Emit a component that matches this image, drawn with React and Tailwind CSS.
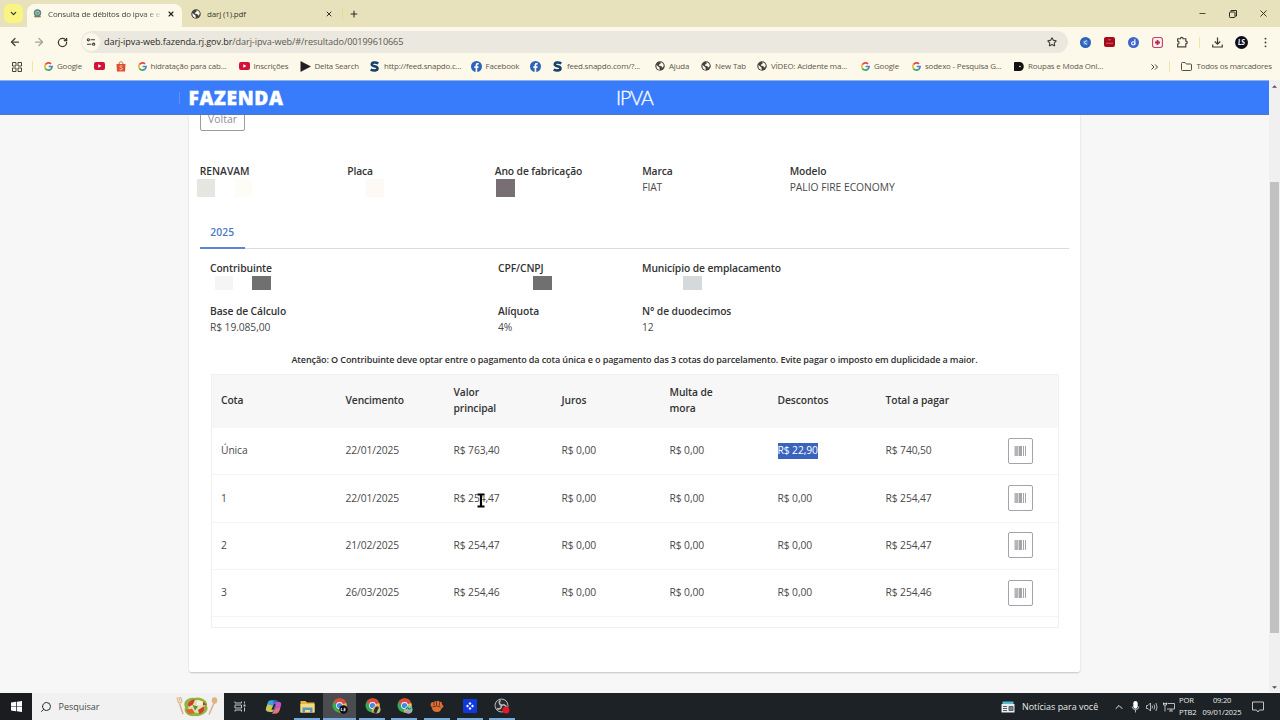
import { ArrowLeft, ArrowRight, RotateCw, Star, X, Plus, ChevronDown, ChevronUp, Minus, Search } from "lucide-react";

function Globe() {
  return (
    <svg viewBox="0 0 20 20" className="size-[10px] shrink-0">
      <circle cx="10" cy="10" r="9.500" fill="#45443c" />
      <path d="M3 8 L9 13 L9.500 18 C5 17 2 14 3 8Z M11 2.500 C15 3 17.500 6 17.500 10 L14.500 13.500 L12.500 10 L8 9.500 L8 7 L11 6Z" fill="#fdf9ea" />
    </svg>
  );
}

function GoogleG() {
  return (
    <svg viewBox="0 0 24 24" className="size-[9px] shrink-0" fill="none" strokeWidth="4.500">
      <path d="M18.800 5.200A9.600 9.600 0 0 0 3.700 7.200" stroke="#e5483a" />
      <path d="M3.700 7.200A9.600 9.600 0 0 0 3.700 16.800" stroke="#efb62c" />
      <path d="M3.700 16.800A9.600 9.600 0 0 0 18.200 19.300" stroke="#3fa35a" />
      <path d="M18.200 19.300A9.600 9.600 0 0 0 21.600 12H12.500" stroke="#4a80dd" />
    </svg>
  );
}

function YouTube() {
  return (
    <svg viewBox="0 0 22 16" className="h-[8px] w-[11px] shrink-0">
      <rect width="22" height="16" rx="4" fill="#d3123c" />
      <path d="M8.500 4.500 15 8l-6.500 3.500Z" fill="#fff" />
    </svg>
  );
}

function Shop() {
  return (
    <svg viewBox="0 0 20 22" className="h-[11px] w-[10px] shrink-0">
      <path d="M6 6C6 0 14 0 14 6" fill="none" stroke="#d8502f" strokeWidth="1.800" />
      <path d="M1 6H19L18 21H2Z" fill="#dd4f30" />
      <path d="M13 10.500C11 8.500 7.500 9.500 8 11.500C8.500 13.500 13 13 12.500 16C12 18 9 18 7 16.500" fill="none" stroke="#fbe3d8" strokeWidth="1.700" />
    </svg>
  );
}

function Play() {
  return (
    <svg viewBox="0 0 20 20" className="size-[11px] shrink-0">
      <path d="M1.500 1 19 10 1.500 19Z" fill="#20201e" stroke="#20201e" strokeWidth="1" />
    </svg>
  );
}

function Snap() {
  return (
    <svg viewBox="0 0 20 20" className="size-[11px] shrink-0">
      <path d="M17 4.200C12 2 5 2 5 6.200C5 10.400 15.500 8.800 15.500 13.500C15.500 17.800 8 18 3 15.500" fill="none" stroke="#17416f" strokeWidth="4.600" />
    </svg>
  );
}

function Facebook() {
  return (
    <svg viewBox="0 0 20 20" className="size-[11px] shrink-0">
      <circle cx="10" cy="10" r="10" fill="#2b64bd" />
      <path d="M8.300 20V12.500H6V9.500H8.300V7.500C8.300 5 9.800 3.800 12 3.800H14V6.500H12.700C11.700 6.500 11.400 7 11.400 7.800V9.500H13.900L13.500 12.500H11.400V20Z" fill="#fdf9ea" />
    </svg>
  );
}

function Roupas() {
  return (
    <svg viewBox="0 0 20 18" className="h-[9px] w-[10px] shrink-0">
      <path d="M2 0H12C22 1 22 17 12 18H2C0 18 0 17 0 16V2C0 0 1 0 2 0Z" fill="#111" />
      <circle cx="12" cy="9" r="1.600" fill="#fff" />
    </svg>
  );
}

const bookmarks = [
  { w: "w-[50px]", icon: <GoogleG />, label: "Google" },
  { w: "w-[21.500px]", icon: <YouTube /> },
  { w: "w-[22px]", icon: <Shop /> },
  { w: "w-[101px]", icon: <GoogleG />, label: "hidratação para cab..." },
  { w: "w-[61px]", icon: <YouTube />, label: "Inscrições" },
  { w: "w-[69.500px]", icon: <Play />, label: "Delta Search" },
  { w: "w-[101.500px]", icon: <Snap />, label: "http://feed.snapdo.c..." },
  { w: "w-[59.500px]", icon: <Facebook />, label: "Facebook" },
  { w: "w-[22px]", icon: <Facebook /> },
  { w: "w-[103px]", icon: <Snap />, label: "feed.snapdo.com/?..." },
  { w: "w-[46px]", icon: <Globe />, label: "Ajuda" },
  { w: "w-[56px]", icon: <Globe />, label: "New Tab" },
  { w: "w-[104px]", icon: <Globe />, label: "VÍDEO: Acidente ma..." },
  { w: "w-[51px]", icon: <GoogleG />, label: "Google" },
  { w: "w-[102px]", icon: <GoogleG />, label: "sodexo - Pesquisa G..." },
  { w: "w-[98px]", icon: <Roupas />, label: "Roupas e Moda Onl..." },
];

function TabStrip() {
  return (
    <div className="flex h-[27px] bg-[#e7e2bb] pl-1 text-[8px] tracking-[-0.14px] text-[#3b3a30]">
      <div className="mt-[4px] flex h-[19px] w-[19px] items-center justify-center rounded-md bg-[#f8f583]">
        <ChevronDown className="size-[9px] text-[#2c2b20]" strokeWidth={3} />
      </div>
      <div className="mt-[4px] ml-[4px] flex h-[23px] w-[155px] items-center rounded-t-lg bg-[#fdf9ea] pb-[4px] pl-[6px]">
        <svg viewBox="0 0 20 20" className="size-[9px] shrink-0">
          <circle cx="10" cy="9" r="6.500" fill="#dfe6df" stroke="#5e8a6f" strokeWidth="3.500" />
          <path d="M7 6H13V11L10 14L7 11Z" fill="#718fae" />
          <path d="M3 17H17" stroke="#7b7a52" strokeWidth="3" />
        </svg>
        <span className="ml-[6px] w-[112px] overflow-hidden bg-linear-to-r from-[#3b3a30] from-85% to-[#3b3a3033] bg-clip-text whitespace-nowrap text-transparent">Consulta de débitos do ipva e e</span>
        <X className="ml-[6.500px] size-[8px] shrink-0 text-[#1f1f1b]" strokeWidth={3.2} />
      </div>
      <div className="mt-[4px] flex h-[19px] items-center pl-[9px]">
        <Globe />
        <span className="ml-[6px] w-[118px] whitespace-nowrap">darj (1).pdf</span>
        <X className="size-[8px] text-[#33322a]" strokeWidth={3} />
        <div className="ml-[9px] h-[11px] w-px bg-[#e6e07d]" />
        <Plus className="ml-[6px] size-[10px] text-[#2e2d25]" strokeWidth={2.600} />
      </div>
      <div className="ml-auto flex h-[27px] items-center pr-[11px]">
        <Minus className="size-[9px] text-[#2b2a24]" strokeWidth={2.200} />
        <svg viewBox="0 0 16 16" className="ml-[22px] size-[8px]" fill="none" stroke="#2b2a24" strokeWidth="2">
          <rect x="1" y="4" width="11" height="11" rx="1.500" />
          <path d="M4 3.500V1H15V12H12.500" />
        </svg>
        <X className="ml-[21px] size-[11px] text-[#2b2a24]" strokeWidth={2} />
      </div>
    </div>
  );
}

function Toolbar() {
  return (
    <div className="flex h-[30px] items-center bg-[#fdf9ea] pl-[9px]">
      <ArrowLeft className="size-[12px] text-[#45443b]" strokeWidth={2.500} />
      <ArrowRight className="ml-[12px] size-[12px] text-[#a5a296]" strokeWidth={2.500} />
      <RotateCw className="ml-[12px] size-[11px] text-[#3c3b33]" strokeWidth={2.800} />
      <div className="ml-[13px] flex h-[22px] w-[987px] items-center rounded-full bg-[#ebe8df] pl-[1px]">
        <div className="flex size-[18px] items-center justify-center rounded-full bg-[#fdf9ea]">
          <svg viewBox="0 0 20 18" className="h-[8px] w-[10px]" fill="none" stroke="#3c3b33" strokeWidth="2.400">
            <circle cx="4" cy="4" r="2.500" />
            <path d="M9 4H19M1 14H11" />
            <circle cx="16" cy="14" r="2.500" />
          </svg>
        </div>
        <span className="ml-[4px] text-[9.100px] tracking-[-0.09px] whitespace-nowrap text-[#5b594e]">
          <span className="text-[#2a2922]">darj-ipva-web.fazenda.rj.gov.br</span>/darj-ipva-web/#/resultado/00199610665
        </span>
        <Star className="mr-[11px] ml-auto size-[10px] text-[#3c3b33]" strokeWidth={2.500} />
      </div>
      <svg viewBox="0 0 20 20" className="ml-[12px] size-[11px]">
        <circle cx="10" cy="10" r="10" fill="#2a62b8" />
        <circle cx="10" cy="10" r="5.500" fill="#4a7fce" />
        <path d="M12.500 6.500 7 10 12.500 13.500" fill="none" stroke="#d8e6fa" strokeWidth="1.800" />
      </svg>
      <svg viewBox="0 0 22 20" className="ml-[13px] h-[10px] w-[11px]">
        <rect width="22" height="20" rx="4" fill="#a80c1c" />
        <path d="M4 12.500H18M8 5.500H14" stroke="#cf5a60" strokeWidth="2" />
      </svg>
      <svg viewBox="0 0 20 20" className="ml-[13px] size-[11px]">
        <circle cx="10" cy="10" r="10" fill="#3b67cb" />
        <circle cx="9.500" cy="11.500" r="3" fill="none" stroke="#fff" strokeWidth="2" />
        <path d="M12.500 4V14" stroke="#fff" strokeWidth="2" />
      </svg>
      <svg viewBox="0 0 20 20" className="ml-[13px] size-[11px]">
        <rect x="1" y="1" width="18" height="18" rx="4" fill="#fbeff0" stroke="#c44762" strokeWidth="2" />
        <path d="M10 5.500V14.500M5.500 10H14.500" stroke="#b8264a" strokeWidth="3.200" />
      </svg>
      <svg viewBox="0 0 22 22" className="ml-[13px] size-[12px]" fill="none" stroke="#45443b" strokeWidth="2.200">
        <path d="M3 5H8C8 1.500 13 1.500 13 5H18V9.500C21.500 9.500 21.500 14.500 18 14.500V20H3V15C6.500 15 6.500 9.500 3 9.500Z" />
      </svg>
      <div className="ml-[11px] h-[11px] w-px bg-[#ece8a4]" />
      <svg viewBox="0 0 22 22" className="ml-[12px] size-[11px]" fill="none" stroke="#3c3b33" strokeWidth="2.400">
        <path d="M11 1V14M5.500 9 11 14.500 16.500 9M1.500 15V20H20.500V15" />
      </svg>
      <div className="ml-[12px] flex size-[13px] items-center justify-center rounded-full bg-[#0d0d1c] font-['Lato'] text-[7px] leading-none font-black text-white italic">LS</div>
      <svg viewBox="0 0 4 20" className="ml-[16px] h-[11px] w-[3px]" fill="#3c3b33">
        <circle cx="2" cy="3" r="1.700" />
        <circle cx="2" cy="10" r="1.700" />
        <circle cx="2" cy="17" r="1.700" />
      </svg>
    </div>
  );
}

function Bookmarks() {
  return (
    <div className="flex h-[23px] items-center bg-[#fdf9ea] pb-[4px] pl-[12px] text-[7.900px] tracking-[-0.160px] text-[#5a584c]">
      <svg viewBox="0 0 20 20" className="size-[10px] shrink-0" fill="none" stroke="#45443b" strokeWidth="2">
        <path d="M1 1H8V8H1ZM12 1H19V8H12ZM1 12H8V19H1ZM12 12H19V19H12Z" />
      </svg>
      <div className="ml-[10px] h-[11px] w-px bg-[#ece8a4]" />
      <div className="ml-[11px] flex shrink-0">
        {bookmarks.map((b, i) => (
          <div key={i} className={`${b.w} flex shrink-0 items-center gap-[4px] whitespace-nowrap`}>
            {b.icon}
            {b.label && <span>{b.label}</span>}
          </div>
        ))}
      </div>
      <svg viewBox="0 0 14 12" className="ml-[38.500px] h-[6px] w-[7px] shrink-0" fill="none" stroke="#3c3b33" strokeWidth="2">
        <path d="M1 1 6 6 1 11M8 1 13 6 8 11" />
      </svg>
      <div className="ml-[11px] h-[11px] w-px bg-[#ece8a4]" />
      <svg viewBox="0 0 22 18" className="ml-[11px] h-[9px] w-[11px] shrink-0" fill="none" stroke="#4f4d43" strokeWidth="2">
        <path d="M1 3C1 1.500 1.500 1 3 1H8L10.500 4H19C20.500 4 21 4.500 21 6V15C21 16.500 20.500 17 19 17H3C1.500 17 1 16.500 1 15Z" />
      </svg>
      <span className="ml-[5px] tracking-[-0.200px] whitespace-nowrap">Todos os marcadores</span>
    </div>
  );
}

function Field({ w, label, children }) {
  return (
    <div className={`${w} shrink-0 leading-[16px] whitespace-nowrap`}>
      <div className="font-semibold text-[#333]">{label}</div>
      <div className="h-[16px]">{children}</div>
    </div>
  );
}

const cols = "grid grid-cols-[124.500px_108px_108px_108px_108px_108px_100px_1fr] items-center pl-[9.500px]";

const rows = [
  ["Única", "22/01/2025", "R$ 763,40", "R$ 0,00", "R$ 0,00", "R$ 22,90", "R$ 740,50"],
  ["1", "22/01/2025", "R$ 254,47", "R$ 0,00", "R$ 0,00", "R$ 0,00", "R$ 254,47"],
  ["2", "21/02/2025", "R$ 254,47", "R$ 0,00", "R$ 0,00", "R$ 0,00", "R$ 254,47"],
  ["3", "26/03/2025", "R$ 254,46", "R$ 0,00", "R$ 0,00", "R$ 0,00", "R$ 254,46"],
];

function BarcodeButton() {
  return (
    <button className="-mt-px ml-[22px] flex h-[26px] w-[25px] items-center justify-center rounded-[2px] border border-[#a3a3a8] bg-white">
      <svg viewBox="0 0 12 10" className="h-[10px] w-[12px]">
        <rect x="0.500" width="4" height="10" fill="#b4b4b8" />
        <rect x="5" width="3" height="10" fill="#a4a4a9" />
        <rect x="9" width="1" height="10" fill="#a4a4a9" />
        <rect x="11" width="1" height="10" fill="#a4a4a9" />
      </svg>
    </button>
  );
}

function QuotaTable() {
  return (
    <div className="relative mt-[6.500px] ml-[0.500px] h-[254px] w-[848px] border border-[#f0f0f0]">
      <div className={`${cols} h-[53px] bg-[#f7f7f7] pb-[4px] leading-[16px] font-semibold text-[#333]`}>
        <div>Cota</div>
        <div>Vencimento</div>
        <div className="w-[50px]">Valor principal</div>
        <div>Juros</div>
        <div className="w-[50px]">Multa de mora</div>
        <div>Descontos</div>
        <div>Total a pagar</div>
      </div>
      {rows.map((r, i) => (
        <div key={r[0]} className={`${cols} h-[47.300px] border-b border-[#f4f4f4]`}>
          {r.map((c, j) => (
            <div key={j}>
              <span className={i === 0 && j === 5 ? "inline-block h-[16px] bg-[#3a63bd] leading-[15px] text-white" : ""}>{c}</span>
            </div>
          ))}
          <BarcodeButton />
        </div>
      ))}
      <svg viewBox="0 0 8 15" className="absolute top-[118px] left-[265px] h-[15px] w-[8px]" fill="none">
        <path d="M0.500 1.500H7.500M0.500 13.500H7.500M4 1.500V13.500" stroke="#fff" strokeWidth="3" />
        <path d="M0.500 1.500H7.500M0.500 13.500H7.500M4 1.500V13.500" stroke="#000" strokeWidth="2.200" />
      </svg>
    </div>
  );
}

function Page() {
  return (
    <div className="flex h-[612px] w-full">
      <div className="flex w-[1269px] flex-col bg-[#f7f7f7] text-[10.300px] tracking-[-0.1px] text-[#4a4a4a]">
        <div className="relative z-10 flex h-[35px] shrink-0 items-center border-t border-b border-t-[#8fb0e6] border-b-[#5477b8] bg-[#397cfb] text-white">
          <div className="ml-[179px] h-[12px] w-px bg-[#5a93fb]" />
          <div className="ml-[8.500px] w-[427.500px] pt-[1px] text-[19.200px] font-extrabold tracking-[0.650px] [-webkit-text-stroke:0.4px_white]">FAZENDA</div>
          <div className="font-['Lato'] text-[19.500px] font-light tracking-[-1px] [-webkit-text-stroke:0.3px_white]">IPVA</div>
        </div>
        <div className="mx-auto h-[558px] w-[891px] shrink-0 rounded-b-[3px] border-b border-b-[#cfcfcf] bg-white px-[11px] shadow-[0_0_2px_rgba(0,0,0,0.18)]">
          <button className="-mt-[7px] flex h-[23px] w-[45px] items-center justify-center rounded-[2px] border border-[#9a9ba3] tracking-[0.1px] text-[#8b8d99]">Voltar</button>
          <div className="mt-[32px] -ml-[0.300px] flex">
            <Field w="w-[147.500px]" label={<span className="tracking-[0px]">RENAVAM</span>}>
              <div className="-ml-[3px] flex h-[18px]">
                <div className="h-[18px] w-[18px] shrink-0 bg-[#e5e6df]" />
                <div className="ml-[20px] h-[18px] w-[17px] shrink-0 bg-[#fefdf5]" />
              </div>
            </Field>
            <Field w="w-[147.500px]" label="Placa">
              <div className="ml-[18.500px] h-[18px] w-[18px] bg-[#fdfaf6]" />
            </Field>
            <Field w="w-[147.500px]" label="Ano de fabricação">
              <div className="ml-[1px] h-[18px] w-[19px] bg-[#776f73]" />
            </Field>
            <Field w="w-[147.500px]" label="Marca">FIAT</Field>
            <Field w="w-[147.500px]" label="Modelo"><span className="tracking-[-0.030px]">PALIO FIRE ECONOMY</span></Field>
          </div>
          <div className="mt-[21px] flex h-[33px] border-b border-[#dcdcdc]">
            <div className="-mb-px flex h-[33px] w-[44.500px] justify-center border-b-2 border-[#5b87d3] pt-[7px] leading-[18px] font-semibold tracking-[0.050px] text-[#4a7ac6]">2025</div>
          </div>
          <div className="px-[10px]">
            <div className="mt-[11px] flex">
              <Field w="w-[288px]" label="Contribuinte">
                <div className="flex pl-[5px]">
                  <div className="h-[14px] w-[18px] bg-[#f5f5f5]" />
                  <div className="ml-[19px] h-[14px] w-[19px] bg-[#707070]" />
                </div>
              </Field>
              <Field w="w-[144px]" label="CPF/CNPJ">
                <div className="ml-[35px] h-[14px] w-[19px] bg-[#707070]" />
              </Field>
              <Field w="w-[144px]" label="Município de emplacamento">
                <div className="ml-[41px] h-[14px] w-[19px] bg-[#d4dadb]" />
              </Field>
            </div>
            <div className="mt-[11px] flex">
              <Field w="w-[288px]" label="Base de Cálculo">R$ 19.085,00</Field>
              <Field w="w-[144px]" label="Alíquota">4%</Field>
              <Field w="w-[144px]" label="N° de duodecimos">12</Field>
            </div>
            <div className="mt-[16.500px] text-center text-[9.050px] leading-[16px] font-semibold tracking-[-0.115px] whitespace-nowrap text-[#2e2e2e]">
              Atenção: O Contribuinte deve optar entre o pagamento da cota única e o pagamento das 3 cotas do parcelamento. Evite pagar o imposto em duplicidade a maior.
            </div>
            <QuotaTable />
          </div>
        </div>
      </div>
      <div className="flex w-[11px] flex-col items-center bg-[#f0f0f0]">
        <svg viewBox="0 0 8 4" className="mt-[5px] h-[3px] w-[5px]"><path d="M0 4 4 0 8 4Z" fill="#505050" /></svg>
        <div className="mt-[94px] h-[451px] w-[9px] bg-[#c1c1c1]" />
        <svg viewBox="0 0 8 4" className="mt-[53px] h-[3px] w-[5px]"><path d="M0 0 4 4 8 0Z" fill="#505050" /></svg>
      </div>
    </div>
  );
}

function Chrome({ badge }) {
  return (
    <svg viewBox="0 0 32 32" className="ml-[2px] size-[16px]">
      <circle cx="15" cy="15" r="14" fill="#39a852" />
      <path d="M15 15 3 8A14 14 0 0 1 28.500 10Z" fill="#e2483c" />
      <path d="M15 15 28.500 10A14 14 0 0 1 14 29Z" fill="#f3c13a" />
      <circle cx="15" cy="15" r="6.800" fill="#f3f6fa" />
      <circle cx="15" cy="15" r="5.200" fill="#4285e8" />
      {badge}
    </svg>
  );
}

function TaskItem({ active, open = true, children, w = "w-[32.600px]" }) {
  return (
    <div className={`${w} flex shrink-0 flex-col items-center ${active ? "bg-[#4a4c4f]" : ""}`}>
      <div className="flex h-[25px] items-center pt-px">{children}</div>
      {open && <div className={`h-[2px] bg-[#78aadb] ${active ? "w-full" : "w-[26px]"}`} />}
    </div>
  );
}

function Salad() {
  return (
    <svg viewBox="0 0 84 42" className="h-[21px] w-[42px]">
      <path d="M7 15 14 36" stroke="#dcb184" strokeWidth="3" />
      <path d="M2 3 4 11Q6 16 10 13L12 10 9 2M6 2 8 11" fill="none" stroke="#dfb27f" strokeWidth="2.200" />
      <path d="M76 14 66 37" stroke="#dcb184" strokeWidth="3" />
      <ellipse cx="77" cy="9" rx="5.500" ry="6.500" fill="#dfb27f" />
      <path d="M18 22C12 10 27 2 36 4C48 0 65 8 62 20C68 32 50 42 38 40C26 42 14 34 18 22Z" fill="#8fb53f" />
      <ellipse cx="41" cy="21" rx="17" ry="13" fill="#dfe3b4" />
      <path d="M24 16Q28 7 38 7L34 17 25 22ZM44 28 57 20Q59 30 47 36Z" fill="#cf3d2b" />
      <path d="M19 28 32 25 38 34 26 36Z" fill="#e0642f" />
      <path d="M42 8 54 11 51 19 42 18Z" fill="#f6efdc" />
      <path d="M33 18 44 21 38 29Z" fill="#5c9431" />
      <path d="M54 12 61 17 54 19Z" fill="#c33a2a" />
    </svg>
  );
}

function Taskbar() {
  return (
    <div className="flex h-[27px] bg-[#1c2226] text-[#e9eaea]">
      <div className="flex w-[32px] items-center justify-center bg-[#1b1c20]">
        <svg viewBox="0 0 22 22" className="size-[11px]" fill="#fff">
          <path d="M0 3 10 1.700V10.300H0ZM11.500 1.500 22 0V10.300H11.500ZM0 11.700H10V20.300L0 19ZM11.500 11.700H22V22L11.500 20.500Z" />
        </svg>
      </div>
      <div className="flex w-[192px] items-center bg-[#f1f1f1] pl-[8px] text-[9px] text-[#484848]">
        <Search className="size-[12px] -scale-x-100 text-[#2b2b2b]" strokeWidth={2} />
        <span className="ml-[6.500px] pt-px">Pesquisar</span>
        <div className="mr-[6px] ml-auto"><Salad /></div>
      </div>
      <TaskItem open={false} w="w-[32px]">
        <svg viewBox="0 0 24 22" className="h-[11px] w-[12px]" fill="none" stroke="#d7d9da" strokeWidth="1.800">
          <path d="M2 1V4H15V1M2 21V18H15V21M2 8H15V14H2ZM21 1V5M21 13V21" />
          <rect x="20" y="8" width="2" height="2" />
        </svg>
      </TaskItem>
      <TaskItem open={false} w="w-[35px]">
        <svg viewBox="0 0 32 28" className="h-[15px] w-[17px]">
          <path d="M10 2H20Q23 2 22 6L17 21Q15 26 10 24H6Q0 23 2 17L5 7Q6 2 10 2Z" fill="#37a4dd" />
          <path d="M2 17 5 10 17 13 15 22Q13 26 8 24Q0 23 2 17Z" fill="#d3c64b" />
          <path d="M15 8Q17 4 22 5H26Q32 6 30 12L27 22Q25 27 21 27H13Q17 25 18 20L20 13Z" fill="#c355c8" />
          <path d="M17 20 29 15 27 22Q25 27 21 27H13Q16 25 17 20Z" fill="#ec6f72" />
          <path d="M16 2H20Q24 2 25 6H21Q17 6 16 9Z" fill="#2563c4" />
          <path d="M17 9H20L16 20H12Z" fill="#1c2226" />
        </svg>
      </TaskItem>
      <TaskItem w="w-[32px]">
        <svg viewBox="0 0 30 26" className="h-[13px] w-[15px]">
          <path d="M1 2H11L14 5H29V25H1Z" fill="#e9b53d" />
          <path d="M1 8H29V25H1Z" fill="#f7da79" />
          <path d="M5 15H25V25H20V20H10V25H5Z" fill="#559ac4" />
        </svg>
      </TaskItem>
      <TaskItem active>
        <Chrome badge={<><circle cx="23" cy="23" r="8.500" fill="#0c0d16" /><path d="M19 20 18 25H21M27 20.500H24.500L24 23H26.500L26 25.500H22.500" fill="none" stroke="#fff" strokeWidth="1.600" /></>} />
      </TaskItem>
      <TaskItem>
        <Chrome badge={<><circle cx="23" cy="23" r="8" fill="#c8b68f" /><path d="M17 28C19 18 24 14 28 20C25 22 25 28 22 31Z" fill="#332a20" /></>} />
      </TaskItem>
      <TaskItem>
        <Chrome badge={<><circle cx="23" cy="23" r="8" fill="#78cbb4" /><path d="M16 26H30Q27 31 23 31T16 26Z" fill="#de8db0" /><path d="M18 22 22 19 24 23 29 20" fill="none" stroke="#306c68" strokeWidth="2" /></>} />
      </TaskItem>
      <TaskItem>
        <svg viewBox="0 0 28 26" className="h-[13px] w-[14px]">
          <path d="M3 5Q6 3 8 5Q9 1 13 3Q17 0 19 4Q24 2 24 8L27 13Q25 16 23 17Q21 24 14 24Q5 24 4 16L1 10Q1 7 3 5Z" fill="#dc7034" />
          <path d="M8 5V11M13 4V11M19 5V11M5 14Q13 10 21 14" fill="none" stroke="#5b2615" strokeWidth="1.600" />
        </svg>
      </TaskItem>
      <TaskItem>
        <svg viewBox="0 0 28 28" className="size-[14px]">
          <rect width="28" height="28" rx="2" fill="#1138df" />
          <path d="M14 6 17 9 14 12 11 9ZM14 16 17 19 14 22 11 19ZM9 11 12 14 9 17 6 14ZM19 11 22 14 19 17 16 14Z" fill="#fff" />
        </svg>
      </TaskItem>
      <TaskItem>
        <svg viewBox="0 0 32 32" className="size-[16px]" fill="none" stroke="#b9babb">
          <circle cx="15" cy="15" r="13" fill="#2c2c2e" strokeWidth="2" />
          <path d="M13 4C8 9 12 15 16 14M25 20C24 13 18 12 15 16M6 21C12 24 16 19 14 15" strokeWidth="3" />
          <circle cx="24" cy="24" r="7" fill="#e51923" stroke="none" />
        </svg>
      </TaskItem>
      <div className="ml-auto flex items-center pr-[16px]">
        <svg viewBox="0 0 28 24" className="h-[12px] w-[14px]">
          <path d="M3 1H25V6H3Z" fill="#55b9cd" />
          <path d="M1 6H27V23H1Z" fill="#e8eef0" />
          <path d="M4 11H12M4 15H12M4 19H12M16 11H24V19H16Z" stroke="#536169" strokeWidth="2" fill="#74838a" />
        </svg>
        <span className="ml-[7px] w-[77px] text-[8.950px] whitespace-nowrap">Notícias para você</span>
        <ChevronUp className="ml-[14px] size-[12px]" strokeWidth={2} />
        <svg viewBox="0 0 16 22" className="ml-[6px] h-[12px] w-[9px]">
          <rect x="4" y="0" width="8" height="14" rx="4" fill="#fff" />
          <path d="M2 10C2 18 14 18 14 10M8 16V21" fill="none" stroke="#d5d6d7" strokeWidth="1.500" />
        </svg>
        <svg viewBox="0 0 24 20" className="ml-[6px] h-[10px] w-[12px]" fill="none" stroke="#d5d6d7" strokeWidth="1.600">
          <path d="M1 7H4L9 2V18L4 13H1ZM12 7Q14 10 12 13M16 5Q19 10 16 15M20 2Q24 10 20 18" />
        </svg>
        <svg viewBox="0 0 24 20" className="ml-[5px] h-[10px] w-[12px]" fill="none" stroke="#d5d6d7" strokeWidth="1.700">
          <path d="M9 3H23V14H8M12 18H20M16 14V18M1 1V6H7V1M4 6V19M0 3H8" />
        </svg>
        <div className="ml-[4px] w-[20px] pb-px text-[7.600px] leading-[12px] tracking-[-0.1px]">
          <div>POR</div>
          <div>PTB2</div>
        </div>
        <div className="ml-[2px] w-[42px] pb-px text-center text-[7.500px] leading-[12px] tracking-[-0.1px]">
          <div className="tracking-[-0.2px]">09:20</div>
          <div>09/01/2025</div>
        </div>
        <svg viewBox="0 0 24 24" className="ml-[9px] size-[12px]" fill="none" stroke="#d5d6d7" strokeWidth="1.800">
          <path d="M1 2H23V18H15L12 22L9 18H1Z" />
        </svg>
      </div>
    </div>
  );
}

export default function App() {
  return (
    <div className="flex h-[720px] w-[1280px] flex-col overflow-hidden bg-[#f7f7f7] font-['Open_Sans','Noto_Sans',sans-serif]">
      <TabStrip />
      <Toolbar />
      <Bookmarks />
      <Page />
      <div className="h-px" />
      <Taskbar />
    </div>
  );
}
